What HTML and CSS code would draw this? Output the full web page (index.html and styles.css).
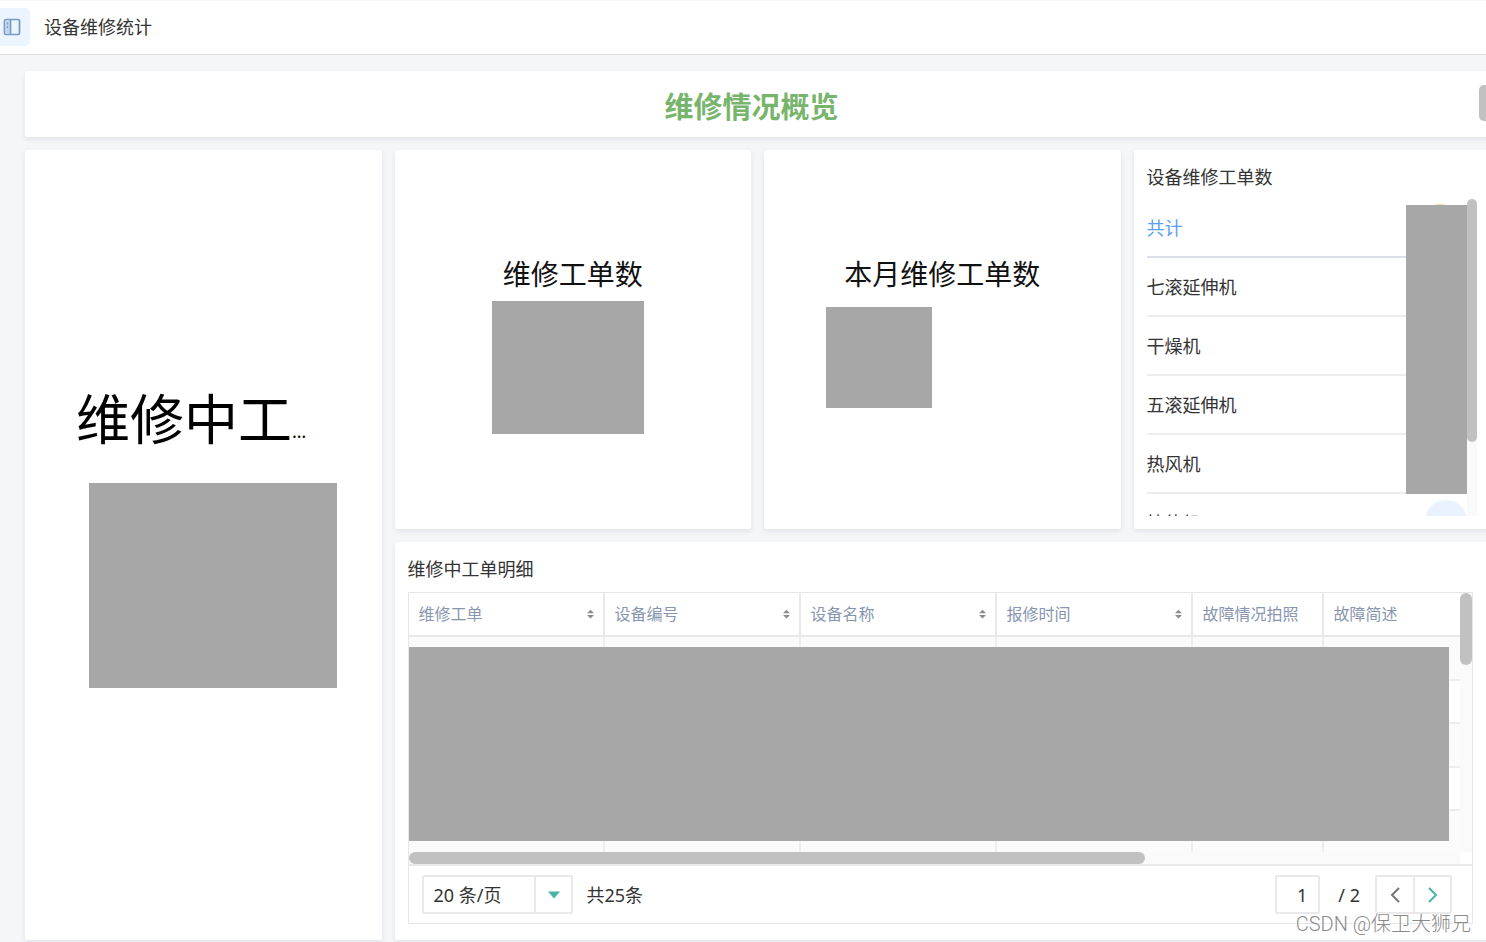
FILE: index.html
```html
<!DOCTYPE html>
<html lang="zh-CN">
<head>
<meta charset="utf-8">
<title>设备维修统计</title>
<link rel="stylesheet" href="styles.css">
</head>
<body>
<div class="page">
  <header class="topbar">
    <button class="menu-toggle" type="button" aria-label="菜单">
      <svg width="18" height="18" viewBox="0 0 18 18" fill="none" stroke="#7899c2" stroke-width="1.7">
        <rect x="1.5" y="1.5" width="15" height="15" rx="1.5"/>
        <rect x="2.3" y="2.3" width="4.4" height="13.4" fill="#c3d5ec" stroke="none"/>
        <path d="M7.5 1.5v15"/>
        <path d="M4.5 4.5v2M4.5 8v2" stroke-width="1.3"/>
      </svg>
    </button>
    <h1 class="topbar-title">设备维修统计</h1>
  </header>

  <main class="dashboard">
    <section class="card banner">
      <h2 class="banner-title">维修情况概览</h2>
      <span class="edge-handle"></span>
    </section>

    <section class="card metric metric-large">
      <h3 class="metric-title-large">维修中工<span class="ellipsis">…</span></h3>
      <div class="mask mask-large"></div>
    </section>

    <section class="card metric">
      <h3 class="metric-title">维修工单数</h3>
      <div class="mask mask-total"></div>
    </section>

    <section class="card metric">
      <h3 class="metric-title">本月维修工单数</h3>
      <div class="mask mask-month"></div>
    </section>

    <section class="card ranking">
      <h3 class="card-title">设备维修工单数</h3>
      <div class="list-view">
        <ul class="list">
          <li class="list-row list-total">共计<span class="badge badge-total"></span></li>
          <li class="list-row">七滚延伸机</li>
          <li class="list-row">干燥机</li>
          <li class="list-row">五滚延伸机</li>
          <li class="list-row">热风机</li>
          <li class="list-row">拉伸机<span class="badge">1</span></li>
        </ul>
        <div class="scroll-track"><div class="scroll-thumb list-thumb"></div></div>
        <div class="mask mask-list"></div>
      </div>
    </section>

    <section class="card detail">
      <h3 class="card-title">维修中工单明细</h3>
      <div class="grid-box">
        <div class="grid-view">
          <div class="grid-scroll">
            <table class="orders">
              <colgroup><col class="col-wide"><col class="col-wide"><col class="col-wide"><col class="col-wide"><col class="col-photo"><col></colgroup>
              <thead>
                <tr>
                  <th><div class="th-in">维修工单<svg class="sort" viewBox="0 0 8 10"><path d="M4 0L8 4H0zM4 10L0 6h8z"/></svg></div></th>
                  <th><div class="th-in">设备编号<svg class="sort" viewBox="0 0 8 10"><path d="M4 0L8 4H0zM4 10L0 6h8z"/></svg></div></th>
                  <th><div class="th-in">设备名称<svg class="sort" viewBox="0 0 8 10"><path d="M4 0L8 4H0zM4 10L0 6h8z"/></svg></div></th>
                  <th><div class="th-in">报修时间<svg class="sort" viewBox="0 0 8 10"><path d="M4 0L8 4H0zM4 10L0 6h8z"/></svg></div></th>
                  <th><div class="th-in">故障情况拍照</div></th>
                  <th><div class="th-in">故障简述</div></th>
                </tr>
              </thead>
              <tbody>
                <tr><td></td><td></td><td></td><td></td><td></td><td></td></tr>
                <tr><td></td><td></td><td></td><td></td><td></td><td></td></tr>
                <tr><td></td><td></td><td></td><td></td><td></td><td></td></tr>
                <tr><td></td><td></td><td></td><td></td><td></td><td></td></tr>
                <tr><td></td><td></td><td></td><td></td><td></td><td></td></tr>
              </tbody>
            </table>
          </div>
          <div class="scroll-track grid-track"><div class="scroll-thumb grid-thumb"></div></div>
          <div class="mask mask-grid"></div>
        </div>
        <div class="scroll-x"><div class="scroll-x-track"><div class="scroll-thumb x-thumb"></div></div></div>
        <div class="pager">
          <div class="select-box">
            <select class="page-size" aria-label="每页条数"><option>20 条/页</option></select>
            <span class="select-arrow"><svg width="14" height="8" viewBox="0 0 14 8"><path d="M1 0.5h12L7 7.5z" fill="#45b5a6"/></svg></span>
          </div>
          <span class="total">共25条</span>
          <input class="page-input" type="text" value="1" aria-label="页码">
          <span class="page-total">/ 2</span>
          <div class="pager-nav">
            <button type="button" class="nav-btn" aria-label="上一页"><svg width="12" height="16" viewBox="0 0 12 16" fill="none" stroke="#777" stroke-width="2"><path d="M10 1L3 8l7 7"/></svg></button>
            <button type="button" class="nav-btn nav-next" aria-label="下一页"><svg width="12" height="16" viewBox="0 0 12 16" fill="none" stroke="#45b5a6" stroke-width="2"><path d="M2 1l7 7-7 7"/></svg></button>
          </div>
        </div>
      </div>
    </section>
  </main>
  <div class="watermark">CSDN @保卫大狮兄</div>
</div>
</body>
</html>
```
FILE: styles.css
```css
* { box-sizing: border-box; }

body {
  margin: 0;
  background: #f5f6f8;
  color: #333;
  font-family: "Noto Sans", "Noto Sans CJK SC", sans-serif;
  font-size: 18px;
  line-height: 24px;
}

h1, h2, h3, ul { margin: 0; padding: 0; font-weight: 400; }

button, input, select { font: inherit; color: inherit; }

.page {
  position: relative;
  display: flex;
  flex-direction: column;
  min-height: 100vh;
  overflow: hidden;
}

.topbar {
  display: flex;
  align-items: center;
  gap: 14px;
  height: 55px;
  background: #fff;
  border-bottom: 1px solid #e0e0e2;
  box-shadow: inset 0 1px 0 #f8f8f8;
}

.menu-toggle {
  display: flex;
  align-items: center;
  width: 30px;
  height: 38px;
  padding: 0 3px;
  border: 0;
  border-radius: 0 5px 5px 0;
  background: #ebf4ff;
}

.topbar-title { font-size: 18px; line-height: 24px; }

.dashboard {
  flex: 1;
  display: grid;
  grid-template-columns: repeat(4, minmax(0, 1fr));
  grid-template-rows: auto minmax(379px, 379fr) minmax(398px, 398fr);
  gap: 13px;
  margin-right: -4px;
  padding: 16px 0 2px 25px;
}

.card {
  background: #fff;
  border-radius: 2px;
  box-shadow: 0 2px 5px rgba(60, 60, 120, 0.11);
}

.banner {
  position: relative;
  grid-column: 1 / -1;
  padding: 19px 12px 13px 0;
  text-align: center;
}

.banner-title {
  color: #77b56c;
  font-size: 29px;
  font-weight: 700;
  line-height: 34px;
}

.edge-handle {
  position: absolute;
  top: 14px;
  right: 0;
  width: 11px;
  height: 36px;
  border-radius: 5px;
  background: #c1c1c1;
}

.mask { background: #a7a7a7; }

.metric {
  display: flex;
  flex-direction: column;
  align-items: center;
  padding-top: 106px;
  color: #111;
}

.metric-title { font-size: 28px; line-height: 36px; }

.mask-total { width: 152px; height: 133px; margin: 9px 10px 0 0; }

.mask-month { width: 106px; height: 101px; margin: 15px 126px 0 0; }

.metric-large {
  grid-row: 2 / 4;
  align-items: flex-start;
  padding: 234px 0 0 51px;
}

.metric-title-large { color: #000; font-size: 54px; line-height: 70px; }

.ellipsis { font-size: 18px; line-height: 18px; vertical-align: 2px; }

.mask-large { width: 248px; height: 205px; margin: 29px 0 0 13px; }

.card-title { font-size: 18px; line-height: 24px; }

.ranking { padding: 15px 13px 13px; }

.list-view {
  position: relative;
  display: flex;
  height: 317px;
  margin-top: 10px;
  overflow: hidden;
}

.list { flex: 1; list-style: none; }

.list-row {
  display: flex;
  align-items: center;
  justify-content: space-between;
  height: 59px;
  padding-top: 1px;
  border-bottom: 2px solid #ededef;
}

.list-total { border-color: #dcdfe8; color: #5a9ff5; }

.badge {
  width: 42px;
  height: 42px;
  margin-bottom: 5px;
  border-radius: 50%;
  background: #e9f3ff;
  color: #5a9ff5;
  line-height: 44px;
  text-align: center;
}

.badge-total { margin: 0 6px 6px 0; background: #fbe08a; }

.scroll-track { width: 10px; background: #fafafa; }

.scroll-thumb { border-radius: 6px; background: #c1c1c1; }

.list-thumb { height: 243px; }

.mask-list {
  position: absolute;
  top: 6px;
  right: 10px;
  width: 61px;
  height: 289px;
}

.detail {
  grid-column: 2 / 5;
  padding: 15px 17px 15px 13px;
}

.grid-box {
  margin-top: 11px;
  border: 1px solid #e6e6e8;
}

.grid-view {
  position: relative;
  display: flex;
  height: 259px;
}

.grid-scroll { flex: 1; overflow: hidden; }

.orders {
  width: 100%;
  table-layout: fixed;
  border-collapse: separate;
  border-spacing: 0;
}

.col-wide { width: 196px; }

.col-photo { width: 131px; }

.orders th {
  height: 44px;
  padding: 0 9px 0 10px;
  border-right: 2px solid #e9e9eb;
  border-bottom: 2px solid #e9e9eb;
  color: #8796b0;
  font-size: 16px;
  font-weight: 400;
  text-align: left;
  white-space: nowrap;
}

.th-in {
  display: flex;
  align-items: center;
  justify-content: space-between;
}

.sort { width: 7px; height: 10px; fill: #8c8c8c; }

.orders td {
  height: 44px;
  padding: 0;
  border-right: 2px solid #ededef;
  border-bottom: 2px solid #ededef;
}

.orders tbody tr:nth-child(even) td { height: 43px; }

.orders th:last-child, .orders td:last-child { border-right: 0; }

.orders tbody tr:nth-child(odd) { background: #fbfbfb; }

.grid-track { width: 12px; }

.grid-thumb { height: 72px; }

.mask-grid {
  position: absolute;
  top: 54px;
  right: 23px;
  bottom: 11px;
  left: 0;
}

.scroll-x {
  padding-right: 12px;
  border-bottom: 2px solid #e9e9eb;
}

.scroll-x-track { background: #fafafa; }

.x-thumb { width: 70%; height: 12px; }

.pager {
  display: flex;
  align-items: center;
  padding: 9px 20px 9px 13px;
}

.select-box { position: relative; }

.page-size {
  display: block;
  width: 151px;
  height: 39px;
  padding: 0 40px 0 10px;
  border: 2px solid #e9e9eb;
  border-radius: 2px;
  appearance: none;
  background: #fff;
}

.select-arrow {
  position: absolute;
  top: 0;
  right: 0;
  bottom: 0;
  display: flex;
  align-items: center;
  justify-content: center;
  width: 39px;
  border-left: 2px solid #e9e9eb;
  pointer-events: none;
}

.total { margin: 0 auto 0 14px; }

.page-input {
  width: 45px;
  height: 39px;
  padding: 0 11px;
  border: 2px solid #e9e9eb;
  border-radius: 2px;
  background: #fff;
  text-align: right;
}

.page-total { margin: 0 15px 0 18px; }

.pager-nav {
  display: flex;
  border: 2px solid #e9e9eb;
  border-radius: 2px;
}

.nav-btn {
  display: flex;
  align-items: center;
  justify-content: center;
  width: 36px;
  height: 35px;
  padding: 0;
  border: 0;
  background: #fff;
}

.nav-next { width: 37px; border-left: 2px solid #e9e9eb; }

.watermark {
  position: absolute;
  right: 15px;
  bottom: 6px;
  color: #8a8a8a;
  font-family: Roboto, "Noto Sans CJK SC", sans-serif;
  font-size: 20px;
  font-weight: 300;
  text-shadow: -1px -1px 0 #fff;
}
```
